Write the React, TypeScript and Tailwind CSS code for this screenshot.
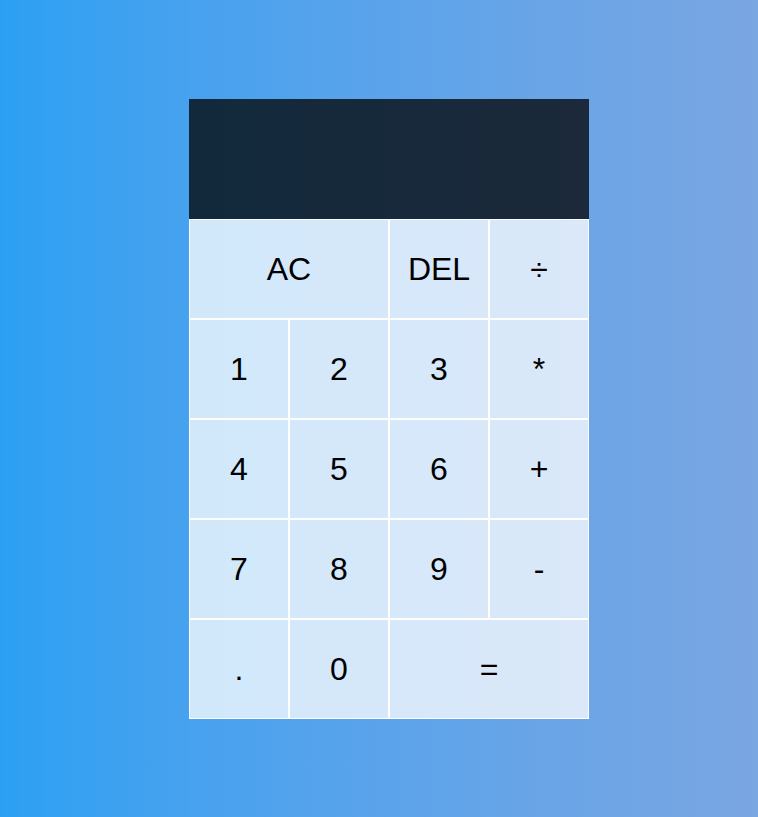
import React from "react";

const Btn = ({ label, wide }: { label: string; wide?: boolean }) => (
  <button
    className={
      "border border-white bg-white/75 text-[32px] text-black cursor-pointer outline-none " +
      (wide ? "col-span-2" : "")
    }
    style={{ fontFamily: '"Liberation Sans", Arial, sans-serif' }}
  >
    {label}
  </button>
);

export default function App() {
  return (
    <div className="min-h-screen w-full bg-gradient-to-r from-[#2ba0f3] to-[#7aa6e2] flex items-center justify-center pl-5">
      <div className="grid grid-cols-[repeat(4,100px)] grid-rows-[120px_repeat(5,100px)]">
        <div className="col-span-4 bg-black/75" />
        <Btn label="AC" wide />
        <Btn label="DEL" />
        <Btn label="÷" />
        <Btn label="1" />
        <Btn label="2" />
        <Btn label="3" />
        <Btn label="*" />
        <Btn label="4" />
        <Btn label="5" />
        <Btn label="6" />
        <Btn label="+" />
        <Btn label="7" />
        <Btn label="8" />
        <Btn label="9" />
        <Btn label="-" />
        <Btn label="." />
        <Btn label="0" />
        <Btn label="=" wide />
      </div>
    </div>
  );
}
